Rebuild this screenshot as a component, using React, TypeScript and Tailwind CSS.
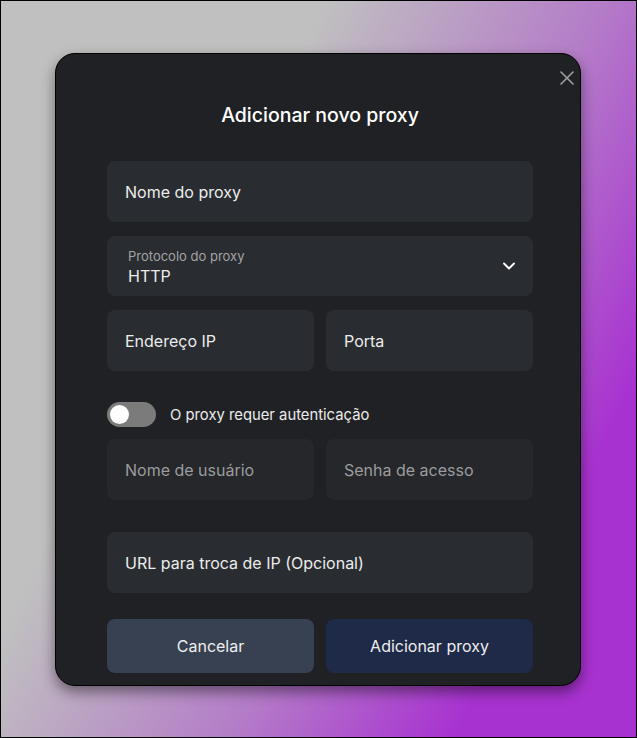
import { ChevronDown, X } from "lucide-react";

function Field({ label, muted }: { label: string; muted?: boolean }) {
  return (
    <div
      className={`h-[61px] rounded-lg flex items-center px-[18px] text-[16px] ${
        muted ? "bg-[#25272b] text-[#9b9c9e]" : "bg-[#292c30] text-[#ececec]"
      }`}
    >
      {label}
    </div>
  );
}

export default function App() {
  return (
    <div
      className="w-[637px] h-[738px] border border-black bg-[linear-gradient(117deg,#c0c0c0_32%,#b47cc8_60%,#a832d0_82%)] overflow-hidden"
      style={{ fontFamily: "Inter, 'Noto Sans', sans-serif" }}
    >
      <div className="ml-[54px] mt-[52px] w-[526px] h-[633px] rounded-[20px] border border-black bg-[#202124] shadow-[0_6px_14px_rgba(0,0,0,0.45)] relative pl-[51px] pt-[46px]">
        <button className="absolute right-[1px] top-[12px] text-[#a0a0a0]">
          <X size={24} strokeWidth={1.6} />
        </button>
        <div className="w-[426px] flex flex-col">
          <h2 className="text-center text-[19.5px] leading-[30px] font-medium text-white">
            Adicionar novo proxy
          </h2>
          <div className="mt-[31px] flex flex-col gap-[14px]">
            <Field label="Nome do proxy" />
            <div className="h-[60px] rounded-lg bg-[#292c30] flex items-center justify-between pl-[21px] pr-[14px]">
              <div className="flex flex-col pt-[3px]">
                <span className="text-[13px] leading-[16px] text-[#a3a4a6]">Protocolo do proxy</span>
                <span className="text-[16px] leading-[22px] mt-[1px] text-[#ececec]">HTTP</span>
              </div>
              <ChevronDown size={20} strokeWidth={2.2} className="text-white" />
            </div>
            <div className="grid grid-cols-2 gap-3">
              <Field label="Endereço IP" />
              <Field label="Porta" />
            </div>
          </div>
          <div className="mt-[31px] flex items-center gap-[14px]">
            <div className="w-[49px] h-[25px] rounded-full bg-[#7b7b7b] flex items-center px-[3px]">
              <div className="w-[19px] h-[19px] rounded-full bg-white" />
            </div>
            <span className="text-[14.8px] leading-[20px] text-[#ececec]">O proxy requer autenticação</span>
          </div>
          <div className="mt-[12px] grid grid-cols-2 gap-3">
            <Field label="Nome de usuário" muted />
            <Field label="Senha de acesso" muted />
          </div>
          <div className="mt-[32px]">
            <Field label="URL para troca de IP (Opcional)" />
          </div>
          <div className="mt-[26px] grid grid-cols-2 gap-3">
            <button className="h-[54px] rounded-lg bg-[#374151] text-[16px] text-[#eeeeee]">
              Cancelar
            </button>
            <button className="h-[54px] rounded-lg bg-[#1e2a47] text-[16px] text-[#eeeeee]">
              Adicionar proxy
            </button>
          </div>
        </div>
      </div>
    </div>
  );
}
